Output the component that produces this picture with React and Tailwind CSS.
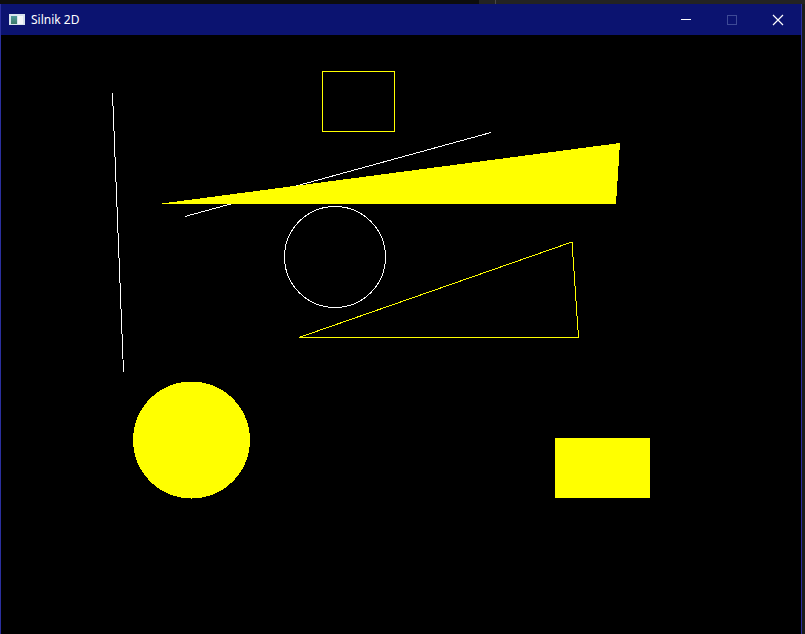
export default function App() {
  return (
    <div className="w-[805px] h-[634px] bg-[#1b1b1b] flex flex-col overflow-hidden" style={{ fontFamily: '"Noto Sans", "Liberation Sans", sans-serif' }}>
      <div className="h-[4px] flex shrink-0">
        <div className="w-[479px] bg-[#0d0d0d]" />
        <div className="w-[17px] bg-[#232323] border-r border-[#4a4a4a]" />
        <div className="flex-1 bg-[#232323]" />
      </div>
      <div className="w-[802px] flex-1 flex flex-col border-x border-[#2b2f9e]">
        <div className="h-[31px] bg-[#0b1370] flex items-center shrink-0">
          <div className="ml-[8px] w-[16px] h-[11px] bg-[#d8e4ee] flex items-center pl-[2px] gap-[1px]">
            <div className="w-[6px] h-[8px] bg-gradient-to-b from-[#4f9a9c] to-[#3c7a6a]" />
            <div className="w-[5px] h-[8px] bg-[#f4f7fa]" />
          </div>
          <span className="ml-[6px] text-[12px] text-white leading-none">Silnik 2D</span>
          <div className="ml-auto flex items-center h-full">
            <div className="w-[46px] h-full flex items-center justify-center">
              <div className="w-[10px] h-px bg-white" />
            </div>
            <div className="w-[46px] h-full flex items-center justify-center">
              <div className="w-[10px] h-[10px] border border-[#3e4a96]" />
            </div>
            <div className="w-[46px] h-full flex items-center justify-center">
              <svg width="12" height="12" viewBox="0 0 12 12">
                <path d="M1 1 L11 11 M11 1 L1 11" stroke="#fff" strokeWidth="1.2" />
              </svg>
            </div>
          </div>
        </div>
        <div className="flex-1 bg-black">
          <svg width="800" height="599" viewBox="1 35 800 599" shapeRendering="crispEdges">
            <rect x="322.5" y="71.5" width="72" height="60" fill="none" stroke="#ffff00" strokeWidth="1" />
            <line x1="112.5" y1="93" x2="123.5" y2="372" stroke="#fff" strokeWidth="1" />
            <line x1="185" y1="216.5" x2="491" y2="132.5" stroke="#fff" strokeWidth="1" />
            <polygon points="158,204 620,143 616,204" fill="#ffff00" />
            <circle cx="335" cy="257" r="50.5" fill="none" stroke="#fff" strokeWidth="1" />
            <polygon points="299,337.5 572,242 578.5,337.5" fill="none" stroke="#ffff00" strokeWidth="1" />
            <circle cx="191.5" cy="440" r="58.5" fill="#ffff00" />
            <rect x="555" y="438" width="95" height="60" fill="#ffff00" />
          </svg>
        </div>
      </div>
    </div>
  )
}
